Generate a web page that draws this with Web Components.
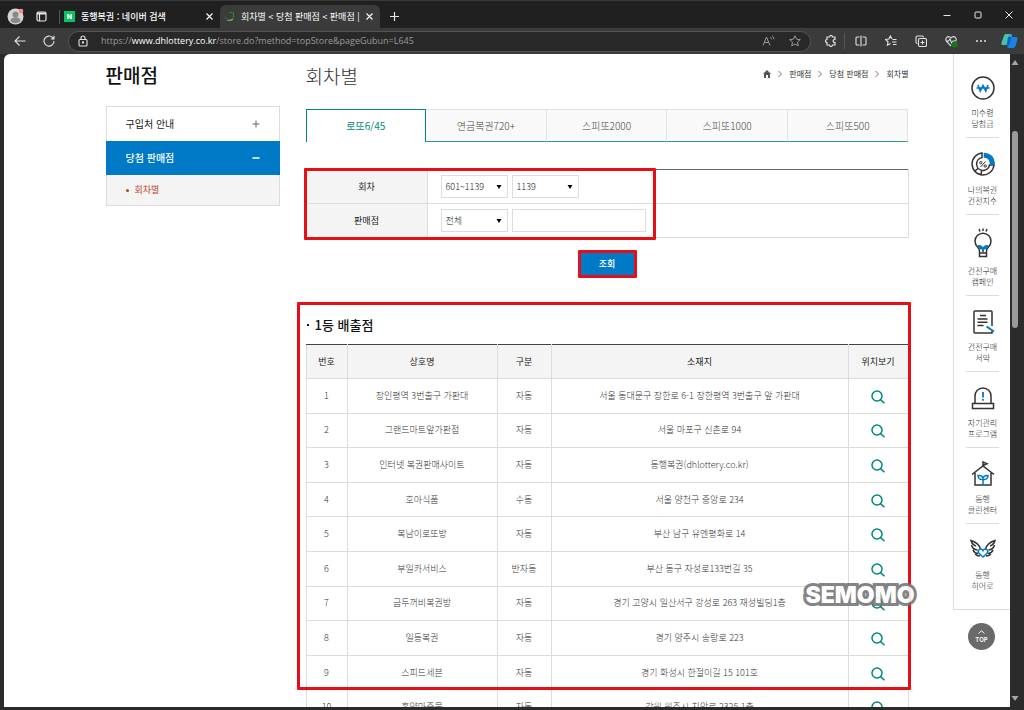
<!DOCTYPE html>
<html lang="ko">
<head>
<meta charset="utf-8">
<meta name="viewport" content="width=device-width, initial-scale=1">
<title>회차별 &lt; 당첨 판매점 &lt; 판매점</title>
<style>
  html, body { margin: 0; height: 100%; }
  body {
    overflow: hidden;
    background: #202020;
    font-family: "Noto Sans CJK KR", "Noto Sans", sans-serif;
    font-size: 9px;
    line-height: 12px;
    color: #555;
  }
</style>
</head>
<body>
<browser-window>
  <title-bar slot="chrome">
    <browser-tab label="동행복권 : 네이버 검색" icon="naver"></browser-tab>
    <browser-tab label="회차별 &lt; 당첨 판매점 &lt; 판매점 |" icon="lottery" active></browser-tab>
  </title-bar>
  <tool-bar slot="chrome"></tool-bar>
  <store-page>
    <side-menu slot="side"></side-menu>
    <page-head></page-head>
    <game-tabs></game-tabs>
    <search-form></search-form>
    <store-results></store-results>
    <quick-rail slot="rail"></quick-rail>
  </store-page>
  <scroll-track slot="scroll"></scroll-track>
</browser-window>

<script>
const define = (name, markup, setup) => {
  const template = document.createElement('template');
  template.innerHTML = markup;
  customElements.define(name, class extends HTMLElement {
    constructor() {
      super();
      this.attachShadow({ mode: 'open' }).append(template.content.cloneNode(true));
    }
    connectedCallback() {
      if (setup && !this.ready) { this.ready = true; setup(this, this.shadowRoot); }
    }
  });
};

const reset = `
  *, *::before, *::after { box-sizing: border-box; }
  button, input, select { font: inherit; color: inherit; margin: 0; padding: 0; border: 0; background: none; border-radius: 0; }
  a { color: inherit; text-decoration: none; }
  svg { display: block; fill: none; stroke: currentColor; flex: none; }
  ul { list-style: none; margin: 0; padding: 0; }
`;

define('browser-window', `
  <style>${reset}
    :host { display: flex; flex-direction: column; height: 100vh; background: #2b2b2b; border-top: 1px solid #383838; box-sizing: border-box; }
    .body { flex: 1; min-height: 0; display: flex; padding: 0 4px 3px; }
    .view { flex: 1; min-width: 0; overflow: hidden; background: #fff; border-top-left-radius: 6px; }
  </style>
  <slot name="chrome"></slot>
  <div class="body"><main class="view"><slot></slot></main><slot name="scroll"></slot></div>
`);

define('title-bar', `
  <style>${reset}
    :host { display: flex; align-items: stretch; height: 27px; background: #202020; color: #e6e6e6; }
    .left { display: flex; align-items: center; gap: 12px; padding: 4px 0 0 7px; width: 59px; }
    .sep { width: 1px; height: 14px; background: #555; align-self: center; margin-top: 4px; }
    .add { width: 28px; display: grid; place-items: center; padding-top: 3px; }
    .controls { margin-left: auto; display: flex; }
    .controls button { width: 31px; display: grid; place-items: center; }
  </style>
  <div class="left">
    <button aria-label="프로필"><svg width="17" height="17" viewBox="0 0 17 17"><g stroke="none"><circle cx="8.5" cy="8.5" r="8" fill="#d6d3d1"/><circle cx="8.5" cy="6.5" r="3" fill="#8d8886"/><path d="M3.5 13c0-5 10-5 10 0-2.600 3-7.400 3-10 0z" fill="#8d8886"/><circle cx="14" cy="3" r="2.300" fill="#ff8a80"/></g></svg></button>
    <button aria-label="작업 영역"><svg width="11" height="11" viewBox="0 0 11 11" stroke-width="1.200"><rect x="1" y="1" width="9" height="9" rx="1.500"/><path d="M1 3h9M3.500 3v7M1 2h9"/></svg></button>
  </div>
  <span class="sep"></span>
  <slot></slot>
  <button class="add" aria-label="새 탭"><svg width="11" height="11" viewBox="0 0 11 11" stroke-width="1.200"><path d="M5.500 1v9M1 5.500h9"/></svg></button>
  <div class="controls">
    <button aria-label="최소화"><svg width="8" height="8" viewBox="0 0 8 8"><path d="M.5 4.500h7"/></svg></button>
    <button aria-label="최대화"><svg width="8" height="8" viewBox="0 0 8 8"><rect x="1" y="1" width="6" height="6" rx="1"/></svg></button>
    <button aria-label="닫기"><svg width="8" height="8" viewBox="0 0 8 8"><path d="M.5.5l7 7M7.500.5l-7 7"/></svg></button>
  </div>
`);

define('browser-tab', `
  <style>${reset}
    :host { display: flex; align-items: center; gap: 5px; width: 160px; padding: 0 6px 0 4px; margin-top: 4px; border-radius: 6px 6px 0 0; font-size: 9px; color: #fff; box-sizing: border-box; }
    :host([active]) { background: #3b3b3b; }
    .label { flex: 1; white-space: nowrap; font-weight: 500; }
    :host([active]) .label { font-weight: 400; }
    .icon { width: 12px; height: 11px; }
    button { width: 9px; height: 12px; display: grid; place-items: center; }
  </style>
  <span class="icon"></span><span class="label"></span>
  <button aria-label="탭 닫기"><svg width="7" height="7" viewBox="0 0 7 7" stroke-width="1.100"><path d="M.5.5l6 6M6.500.5l-6 6"/></svg></button>
`, (host, root) => {
  root.querySelector('.label').textContent = host.getAttribute('label');
  root.querySelector('.icon').innerHTML = host.getAttribute('icon') === 'naver'
    ? '<svg width="11" height="11" viewBox="0 0 11 11"><g stroke="none"><rect width="11" height="11" fill="#03c75a"/><path d="M3 8V3h1.700l1.700 2.500V3H8v5H6.400L4.700 5.500V8z" fill="#fff"/></g></svg>'
    : '<svg width="11" height="11" viewBox="0 0 11 11" stroke-width="1.200"><path d="M5 1.500h3q1.500 0 1.500 1.500v4" stroke="#3e7a3a"/><path d="M9 8q-2 2-6 1" stroke="#7cb342"/><path d="M1.500 8V5.500" stroke="#2e6b4b"/></svg>';
});

define('tool-bar', `
  <style>${reset}
    :host { display: flex; align-items: center; height: 26px; background: #3b3b3b; color: #e2e2e2; padding: 0 7px 0 12px; box-sizing: border-box; }
    button { display: grid; place-items: center; width: 16px; height: 16px; }
    .nav { display: flex; gap: 13px; margin-right: 11px; }
    .address { flex: 1; min-width: 0; display: flex; align-items: center; gap: 11px; height: 21px; padding: 0 7px; background: #282828; border: 1px solid #555; border-radius: 11px; color: #9a9a9a; }
    .url { flex: 1; overflow: hidden; white-space: nowrap; font-family: "Open Sans", "Noto Sans", sans-serif; font-size: 9px; }
    .url b { font-weight: 500; color: #fff; }
    .tools { display: flex; align-items: center; gap: 14px; margin-left: 10px; }
    .tools .first { width: 24px; border-right: 1px solid #555; padding-right: 4px; margin-right: -6px; }
    .copilot { margin-left: -2px; }
    .copilot g { stroke: none; }
    .dots { fill: currentColor; stroke: none; }
  </style>
  <div class="nav">
    <button aria-label="뒤로"><svg width="12" height="12" viewBox="0 0 12 12" stroke-width="1.100"><path d="M11.500 6H1M5.500 1.500L1 6l4.500 4.500"/></svg></button>
    <button aria-label="새로 고침"><svg width="12" height="12" viewBox="0 0 12 12" stroke-width="1.100"><path d="M11 6a5 5 0 1 1-1.500-3.500L11 4M11 .8V4H7.800"/></svg></button>
  </div>
  <div class="address">
    <svg width="14" height="12" viewBox="0 0 14 12" color="#e2e2e2" stroke-width="1.100"><rect x="3" y="4.500" width="8" height="6.500" rx="1"/><path d="M5 4.500V3q0-2 2-2t2 2v1.500"/><circle cx="7" cy="7.500" r=".6"/></svg>
    <span class="url">https://<b>www.dhlottery.co.kr</b>/store.do?method=topStore&amp;pageGubun=L645</span>
    <button aria-label="소리내어 읽기"><svg width="13" height="12" viewBox="0 0 13 12"><path d="M1 10.500L4.500 2 8 10.500M2.200 7.500h4.600M8.500 2.200q1 .8 1 2M10 .8q2 1.200 2 3.500"/></svg></button>
    <button aria-label="즐겨찾기에 추가"><svg width="12" height="12" viewBox="0 0 12 12"><path d="M6 .8l1.600 3.400 3.700.4-2.800 2.500.8 3.700L6 9l-3.300 1.800.8-3.700L.7 4.600l3.700-.4z"/></svg></button>
  </div>
  <div class="tools">
    <button class="first" aria-label="확장"><svg width="12" height="12" viewBox="0 0 12 12" stroke-width="1.200"><path d="M2 2h2.500q.2-1.500 1.500-1.500T7.500 2H10v2.500q-1.800-.2-1.800 1.500T10 7.500V10H7.500q-.2 1.500-1.500 1.500T4.500 10H2V7.500Q.5 7.300.5 6T2 4.500z"/></svg></button>
    <button aria-label="분할 화면"><svg width="12" height="12" viewBox="0 0 12 12" stroke-width="1.100"><path d="M4.500 2H2q-1 0-1 1v6q0 1 1 1h2.500M7.500 2H10q1 0 1 1v6q0 1-1 1H7.500M6 .5v11"/></svg></button>
    <button aria-label="즐겨찾기"><svg width="12" height="12" viewBox="0 0 12 12" stroke-width="1.100"><path d="M7 4L5.300 1 3.800 4.100.6 4.500 3 6.800l-.6 3.500L5.500 8.500M7.500 4.500h4M7 7h4.500M8 9.500h3.500"/></svg></button>
    <button aria-label="컬렉션"><svg width="12" height="12" viewBox="0 0 12 12" stroke-width="1.100"><path d="M2.500 8.500Q1 8.500 1 7V2.500Q1 1 2.500 1H7q1.500 0 1.500 1.500"/><rect x="3.500" y="3.500" width="8" height="8" rx="1.500"/><path d="M7.500 5.500v4M5.500 7.500h4"/></svg></button>
    <button aria-label="브라우저 필수 요소"><svg width="13" height="13" viewBox="0 0 13 13" stroke-width="1.100"><path d="M6 11L1.500 6.500Q0 4 1.800 2.300 4 .8 6 3q2-2.200 4.200-.7Q12 4 10.700 6M1 6h2.500L5 4l1.700 4L8 6h3"/><circle cx="9.500" cy="9.500" r="3" fill="#107c10" stroke="none"/></svg></button>
    <button aria-label="설정 및 기타"><svg class="dots" width="12" height="4" viewBox="0 0 12 4"><circle cx="2" cy="2" r="1"/><circle cx="6" cy="2" r="1"/><circle cx="10" cy="2" r="1"/></svg></button>
    <button class="copilot" aria-label="Copilot"><svg width="17" height="16" viewBox="0 0 17 16"><g><path d="M5 1h5q1.500 0 1 2L9 10q-.6 2-2.500 2H2Q0 12 .7 9.500L3 3q.6-2 2-2z" fill="#2aa9d6"/><path d="M3 3q.6-2 2-2h3L5.500 9.500Q5 12 2 12 0 12 .7 9.500z" fill="#4cc3a0"/><path d="M10.500 4H15q2 0 1.400 2.500L14.500 13q-.6 2-2.500 2H7.500q-1.500 0-1-2L8.500 6q.5-2 2-2z" fill="#1683e8"/><path d="M7 4h3.500L8 12.500q-.5-.5-2-.5z" fill="#155cb8"/></g></svg></button>
  </div>
`);

define('scroll-track', `
  <style>${reset}
    :host { display: flex; flex-direction: column; align-items: center; width: 10px; background: #2b2b2b; color: #a5a5a5; padding: 6px 0; box-sizing: border-box; }
    .before { flex: 66; } .thumb { flex: 198; width: 6px; background: #9a9a9a; border-radius: 3px; } .after { flex: 370; }
    svg { fill: currentColor; stroke: none; }
  </style>
  <svg width="8" height="5" viewBox="0 0 8 5"><path d="M4 0L7.500 5H.5z"/></svg>
  <span class="before"></span><span class="thumb"></span><span class="after"></span>
  <svg width="8" height="5" viewBox="0 0 8 5"><path d="M4 5L7.500 0H.5z"/></svg>
`);

define('store-page', `
  <style>${reset}
    :host { display: grid; grid-template-columns: minmax(58px, 1fr) minmax(0, 803px) minmax(58px, 1fr); }
    .content { grid-column: 2; display: grid; grid-template-columns: 174px minmax(0, 1fr); gap: 26px; align-items: start; }
    .rail { grid-column: 3; justify-self: end; }
  </style>
  <div class="content"><slot name="side"></slot><section><slot></slot></section></div>
  <div class="rail"><slot name="rail"></slot></div>
`);

define('side-menu', `
  <style>${reset}
    :host { display: block; }
    h2 { margin: 9px 0 19px; font-size: 19px; line-height: 24px; font-weight: 500; color: #111; }
    ul { border: 1px solid #ddd; }
    .top { display: flex; align-items: center; justify-content: space-between; height: 34px; padding: 0 19px; font-size: 10px; color: #222; }
    .open { margin: 0 -1px; padding: 0 20px; background: #0079c6; color: #fff; font-weight: 500; }
    .sub { display: flex; align-items: center; gap: 6px; height: 30px; padding-left: 19px; background: #f4f4f4; color: #c0431f; font-size: 9px; }
    .sub::before { content: ""; width: 3px; height: 3px; border-radius: 2px; background: #c0431f; }
  </style>
  <h2>판매점</h2>
  <nav><ul>
    <li><a class="top" href="#guide">구입처 안내<svg width="8" height="8" viewBox="0 0 8 8" color="#666"><path d="M.5 4h7M4 .5v7"/></svg></a></li>
    <li><a class="top open" href="#stores">당첨 판매점<svg width="8" height="8" viewBox="0 0 8 8" stroke-width="1.500"><path d="M.5 4h7"/></svg></a></li>
    <li><a class="sub" href="#round">회차별</a></li>
  </ul></nav>
`);

define('page-head', `
  <style>${reset}
    :host { display: flex; justify-content: space-between; align-items: flex-start; height: 55px; }
    h1 { margin: 10px 0 0; font-size: 19px; line-height: 24px; font-weight: 300; color: #333; }
    nav { display: flex; align-items: center; gap: 6px; margin-top: 14px; font-size: 8px; color: #333; }
    nav svg { color: #777; }
    .home { fill: #555; stroke: none; }
  </style>
  <h1>회차별</h1>
  <nav aria-label="현재 위치">
    <a href="#home" aria-label="홈"><svg class="home" width="8" height="8" viewBox="0 0 8 8"><path d="M4 0l4 4H7v4H5V5H3v3H1V4H0z"/></svg></a>
    <svg width="6" height="8" viewBox="0 0 6 8"><path d="M1.500 1l3 3-3 3"/></svg>
    <a href="#stores">판매점</a>
    <svg width="6" height="8" viewBox="0 0 6 8"><path d="M1.500 1l3 3-3 3"/></svg>
    <a href="#winners">당첨 판매점</a>
    <svg width="6" height="8" viewBox="0 0 6 8"><path d="M1.500 1l3 3-3 3"/></svg>
    <a href="#round">회차별</a>
  </nav>
`);

define('game-tabs', `
  <style>${reset}
    :host { display: block; margin-bottom: 27px; }
    nav { display: grid; grid-template-columns: repeat(5, 1fr); height: 33px; }
    a { display: grid; place-items: center; font-size: 10px; font-weight: 300; color: #444; background: #f9f9f9; border-style: solid; border-width: 1px 1px 1px 0; border-color: #e3e3e3 #e3e3e3 #2d9c8f; }
    a[aria-current] { background: #fff; color: #00897b; font-weight: 400; border-width: 1px 1px 0 1px; border-color: #00897b; }
  </style>
  <nav>
    <a href="#lotto" aria-current="page">로또6/45</a><a href="#pension">연금복권720+</a><a href="#s2000">스피또2000</a><a href="#s1000">스피또1000</a><a href="#s500">스피또500</a>
  </nav>
`);

define('drop-down', `
  <style>${reset}
    :host { display: inline-grid; width: 67px; height: 23px; }
    select, svg { grid-area: 1 / 1; }
    select { appearance: none; width: 100%; height: 100%; padding: 0 4px; border: 1px solid #ddd; background: #fff; font-size: 9px; font-weight: 300; color: #222; }
    svg { place-self: center end; margin-right: 6px; fill: #000; stroke: none; pointer-events: none; }
  </style>
  <select></select><svg width="6" height="4" viewBox="0 0 6 4"><path d="M.5 0h5L3 4z"/></svg>
`, (host, root) => {
  const select = root.querySelector('select');
  select.setAttribute('aria-label', host.getAttribute('label'));
  select.add(new Option(host.getAttribute('value')));
});

define('mark-box', `
  <style>
    :host { display: block; position: absolute; border: 3px solid #e60f18; border-radius: 1px; box-sizing: border-box; pointer-events: none; }
  </style>
`);

define('search-form', `
  <style>${reset}
    :host { display: block; position: relative; }
    table { width: 100%; border-collapse: collapse; border: 1px solid #ddd; border-top: 1px solid #666; }
    th { width: 121px; height: 34px; padding: 0; font-weight: 400; font-size: 9px; color: #222; background: #f4f4f4; border: 1px solid #ddd; border-top-color: inherit; }
    td { padding: 0 13px; border-bottom: 1px solid #ddd; }
    td div { display: flex; gap: 4px; }
    input { width: 134px; height: 23px; padding: 0 4px; border: 1px solid #ddd; background: #fff; }
    .submit { position: relative; width: 53px; margin: 15px auto 0; }
    .submit button { display: block; width: 100%; height: 22px; background: #0079c6; color: #fff; font-weight: 500; font-size: 9px; }
    .fields { left: -2px; top: -1px; width: 352px; height: 72px; }
    .around { inset: -3px; }
  </style>
  <form onsubmit="return false">
    <table>
      <tr><th scope="row">회차</th><td><div><drop-down label="회차 범위" value="601~1139"></drop-down><drop-down label="회차" value="1139"></drop-down></div></td></tr>
      <tr><th scope="row"><label for="store">판매점</label></th><td><div><drop-down label="검색 구분" value="전체"></drop-down><input id="store" type="text"></div></td></tr>
    </table>
    <div class="submit"><button type="submit">조회</button><mark-box class="around"></mark-box></div>
  </form>
  <mark-box class="fields"></mark-box>
`);

define('water-mark', `
  <style>
    :host { display: block; position: absolute; font-family: Inter, sans-serif; font-size: 23px; line-height: 30px; font-weight: 900; color: #fff; -webkit-text-stroke: 6px #777; paint-order: stroke fill; stroke-linejoin: round; opacity: .9; pointer-events: none; }
  </style><slot></slot>
`);

define('store-results', `
  <style>${reset}
    :host { display: block; position: relative; margin-top: 27px; }
    h3 { display: flex; align-items: center; gap: 6px; height: 42px; margin: 0; padding: 4px 0 0 1px; font-size: 13px; line-height: 20px; font-weight: 500; color: #111; }
    h3::before { content: ""; width: 2px; height: 2px; background: #111; }
    table { width: 100%; height: 381px; border-collapse: collapse; table-layout: fixed; border-top: 1px solid #444; }
    th, td { padding: 0; text-align: center; border: 1px solid #ddd; font-size: 9px; line-height: 12px; white-space: nowrap; }
    th { height: 34px; background: #f4f4f4; color: #222; font-weight: 400; border-top: 1px solid #444; }
    td { font-weight: 300; color: #333; }
    .no { width: 41px; } .name { width: 150px; } .kind { width: 54px; } .map { width: 60px; }
    td button { display: block; margin: 2px auto 0; color: #00897b; }
    .frame { left: -9px; right: -2px; top: 0; height: 388px; }
    water-mark { right: -6px; top: 278px; }
  </style>
  <h3>1등 배출점</h3>
  <table>
    <thead><tr><th class="no" scope="col">번호</th><th class="name" scope="col">상호명</th><th class="kind" scope="col">구분</th><th scope="col">소재지</th><th class="map" scope="col">위치보기</th></tr></thead>
    <tbody></tbody>
  </table>
  <mark-box class="frame"></mark-box>
  <water-mark>SEMOMO</water-mark>
`, (host, root) => {
  const stores = [
    ['장인평역 3번출구 가판대', '자동', '서울 동대문구 장한로 6-1 장한평역 3번출구 앞 가판대'],
    ['그랜드마트앞가판점', '자동', '서울 마포구 신촌로 94'],
    ['인터넷 복권판매사이트', '자동', '동행복권(dhlottery.co.kr)'],
    ['호아식품', '수동', '서울 양천구 중앙로 234'],
    ['복남이로또방', '자동', '부산 남구 유엔평화로 14'],
    ['부일카서비스', '반자동', '부산 동구 자성로133번길 35'],
    ['금두꺼비복권방', '자동', '경기 고양시 일산서구 강성로 263 재성빌딩1층'],
    ['일등복권', '자동', '경기 양주시 송랑로 223'],
    ['스피드세븐', '자동', '경기 화성시 한절이길 15 101호'],
    ['흥양마중물', '자동', '강원 원주시 치악로 2325 1층']
  ];
  root.querySelector('tbody').innerHTML = stores.map(([name, kind, place], i) => `
    <tr><td>${i + 1}</td><td>${name}</td><td>${kind}</td><td>${place}</td>
    <td><button aria-label="${name} 위치보기"><svg width="14" height="14" viewBox="0 0 14 14" stroke-width="1.500"><circle cx="6" cy="6" r="5"/><path d="M9.600 9.600L13.500 13.300"/></svg></button></td></tr>`).join('');
});

define('quick-rail', `
  <style>${reset}
    :host { display: block; width: 57px; }
    ul { border: solid #ddd; border-width: 0 0 1px 1px; padding: 8px 11px 10px 12px; }
    li { border-bottom: 1px solid #ddd; }
    li:last-child { border: 0; }
    a { display: flex; flex-direction: column; align-items: center; gap: 6px; padding: 13px 0 8px; font-size: 8px; line-height: 11px; font-weight: 300; color: #222; text-align: center; white-space: nowrap; }
    svg { color: #333; stroke-width: 1.500; }
    .up { display: flex; flex-direction: column; align-items: center; justify-content: center; gap: 3px; width: 27px; height: 27px; margin: 13px auto 0 15px; border-radius: 50%; background: #6a6a6a; color: #fff; font-family: Inter, sans-serif; font-size: 6px; line-height: 6px; font-weight: 600; }
    .up svg { color: #fff; stroke-width: 1; }
  </style>
  <ul></ul>
  <button class="up"><svg width="7" height="4" viewBox="0 0 7 4"><path d="M.7 3.500l2.800-2.800 2.800 2.800"/></svg>TOP</button>
`, (host, root) => {
  const blue = '#0079c6';
  const items = [
    ['미수령', '당첨금', 26, `<circle cx="13" cy="13" r="11"/><path stroke="${blue}" stroke-width="1.700" d="M8 10l2.200 6L13 10.500l2.800 5.500L18 10M6.500 13h13"/>`],
    ['나의복권', '건전지수', 27, `<path d="M12 2a11 11 0 1 0 12 12h-4.500a6.500 6.500 0 1 1-7.500-7.500zM5 20l3.200-2.800M11 24.500l.5-4.500"/><path d="M14.500 2.500v3.600q5.500.5 6.100 6.400h3.600q-.7-9.200-9.700-10z" fill="${blue}" stroke="${blue}"/><path stroke-width="1" d="M15.500 10.500l-5 5.500"/><circle cx="10.800" cy="11.700" r="1.200" stroke-width="1"/><circle cx="15.200" cy="15" r="1.200" stroke-width="1"/>`],
    ['건전구매', '캠페인', 31, `<path d="M9.500 25v-2q0-2-2-4a8 8 0 1 1 11 0q-2 2-2 4v2zM9.500 25v3.500h7V25M13 24v-5M9 1l1 2.500M13 .5V3M17 1l-1 2.500"/><path d="M13 21.500q-5 .5-5.300-4.300 4.500-.6 5.300 2.500.8-3.100 5.300-2.500-.3 4.800-5.300 4.300z" fill="${blue}" stroke="none"/>`],
    ['건전구매', '서약', 26, `<path d="M22 17V3q0-1-1-1H5Q4 2 4 3v20q0 1 1 1h17v-2M10 6.500h6M7.500 10h10M7.500 13.300h10M7.500 16.600h6"/><path stroke="${blue}" stroke-width="2" d="M16.500 17.500l7.500 5"/>`],
    ['자기관리', '프로그램', 26, `<path d="M5 18.500V11a8 8 0 0 1 16 0v7.500"/><rect x="2.500" y="18.500" width="21" height="5"/><path stroke="${blue}" stroke-width="1.800" d="M13 7v5.500M13 14v1.800"/>`],
    ['동행', '클린센터', 26, `<path d="M2 13.500L13 5l11 8.500M5 12v12h16V12M13 5V1l4 1.800L13 4.500"/><path stroke="${blue}" d="M13 24v-6M13 18.500q-4.500.5-5-4 4-.5 5 2.500 1-3 5-2.500-.5 4.500-5 4z"/>`],
    ['동행', '히어로', 26, `<path d="M10.500 12Q9 6 1 3.500q1 4 5 5.500M1.500 8q1 4.500 6 5M3 13q1 3 5 3.500M5 17q2 2 5 2M15.500 12Q17 6 25 3.500q-1 4-5 5.500M24.500 8q-1 4.500-6 5M23 13q-1 3-5 3.500M21 17q-2 2-5 2"/><path stroke="${blue}" fill="#fff" d="M13 20l-4.300-4q-1.300-2.500.8-3.700 2.300-.8 3.500 1.400 1.200-2.200 3.500-1.400 2.100 1.200.8 3.700z"/>`]
  ];
  root.querySelector('ul').innerHTML = items.map(([a, b, h, art]) =>
    `<li><a href="#quick"><svg width="26" height="${h}" viewBox="0 0 26 ${h}">${art}</svg><span>${a}<br>${b}</span></a></li>`).join('');
});
</script>
</body>
</html>
